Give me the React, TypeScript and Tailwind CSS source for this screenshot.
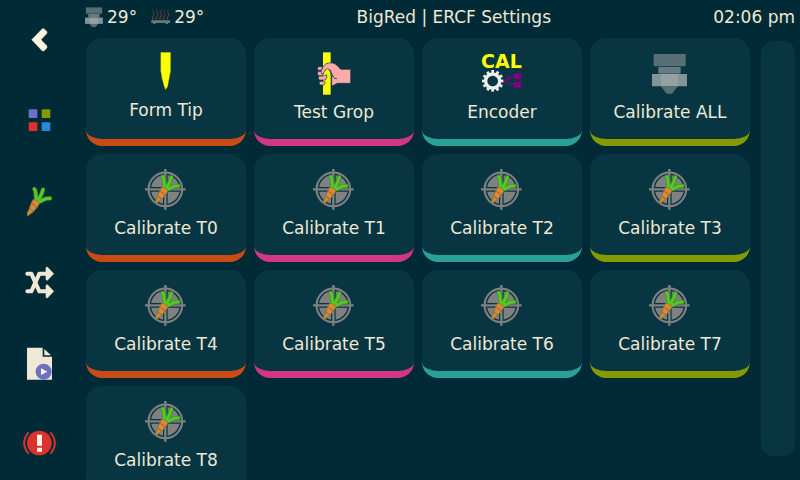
import type { ReactNode } from "react";

function CarrotShape() {
  return (
    <g strokeLinecap="round" strokeLinejoin="round">
      <g fill="none" stroke="#4c7f33" strokeWidth="13">
        <path d="M103 87 L106 92 L109 116" />
        <path d="M129 89 L125 101 L116 119" />
        <path d="M150 115 L137 116 L121 124" />
      </g>
      <path
        d="M102 118 L116 124 L119 130 L110 143 L101 154 L92 161 L83 168 L82 160 L88 147 L91 137 L96 125 Z"
        fill="#e08734"
        stroke="#7f7a3a"
        strokeWidth="3"
      />
      <path d="M97 131 L106 137 M91 147 L99 153 M107 141 L112 142" fill="none" stroke="#7f6a32" strokeWidth="3" />
      <g fill="none" stroke="#50cc22" strokeWidth="9">
        <path d="M103 87 L106 92 L109 116" />
        <path d="M129 89 L125 101 L116 119" />
        <path d="M150 115 L137 116 L121 124" />
      </g>
    </g>
  );
}

function NozzleShape() {
  return (
    <>
      <path d="M203 72h96v37h-96z" fill="#586e75" />
      <path d="M217 111h67v20h-67z" fill="#657b83" />
      <path d="M198 132h105v37H198z" fill="#839496" />
      <path d="M225 132h51v37h-51z" fill="#93a1a1" />
      <path d="M226 170h48l-16 21h-16z" fill="#586e75" />
    </>
  );
}

function TargetIcon() {
  return (
    <svg viewBox="12 24 132 132" className="h-11 w-11" aria-hidden="true">
      <circle cx="76" cy="88" r="47" fill="#808080" />
      <path d="M76 36v104M24 88h104" stroke="#073642" strokeWidth="14" />
      <circle cx="76" cy="88" r="50" fill="none" stroke="#808080" strokeWidth="7" />
      <circle cx="76" cy="88" r="45" fill="none" stroke="#073642" strokeWidth="4" />
      <path d="M76 27v122M15 88h122" stroke="#808080" strokeWidth="7" />
      <g transform="translate(-35 -37)">
        <CarrotShape />
      </g>
    </svg>
  );
}

function TipIcon() {
  return (
    <svg viewBox="192 156 132 126" className="h-[42px] w-11" aria-hidden="true">
      <path
        d="M242 157H272V212L263 260L256 269L252 258L246 236L242 212Z"
        fill="#ffff00"
        stroke="#5f7412"
        strokeWidth="1"
      />
    </svg>
  );
}

function GripIcon() {
  return (
    <svg viewBox="186 66 132 132" className="h-11 w-11" aria-hidden="true">
      <path d="M219 67h23v127h-23z" fill="#ffff00" />
      <g fill="#ffaaaa" stroke="#073642" strokeWidth="2" strokeLinejoin="round">
        <path d="M208 138h16l5-5 2 8-4 9h-19c-4-3-4-9 0-12z" />
        <path d="M210 154h12l4 3-4 8h-12c-3-3-3-8 0-11z" />
        <path d="M205 124h11l5 9-5 4h-11c-3-4-3-9 0-13z" />
        <path d="M205 110h14l-5 11h-9c-3-3-3-8 0-11z" />
        <path d="M213 123L221 108Q227 99 236 99H248Q256 101 262 107L272 118H302V160H262L248 167L245 164V140L240 122L233 116L225 121L221 131L215 132Z" />
      </g>
      <path d="M238 118c6 5 6 13 10 20 3 5 6 8 12 8" fill="none" stroke="#073642" strokeWidth="3" />
    </svg>
  );
}

const gearTeeth = [0, 30, 60, 90, 120, 150];

function EncoderIcon() {
  return (
    <svg viewBox="180 66 132 132" className="h-11 w-11 overflow-visible" aria-hidden="true">
      <text x="183" y="113" fontSize="57" fontWeight="bold" fill="#ffff00" fontFamily="DejaVu Sans, sans-serif">
        CAL
      </text>
      {gearTeeth.map((a) => (
        <path key={a} d="M218 120v65" stroke="#eeeeee" strokeWidth="8" transform={`rotate(${a} 218 153)`} />
      ))}
      <circle cx="218" cy="153" r="26" fill="#eeeeee" />
      <circle cx="218" cy="153" r="16" fill="#073642" />
      <path d="M250 153l22-10M250 153l28 12" stroke="#800080" strokeWidth="4" />
      <path d="M262 139l14 1-7 11z" fill="#800080" />
      <path d="M304 130v18h-17c-11-3-11-15 0-18zM304 155v18h-17c-11-3-11-15 0-18z" fill="#800080" />
    </svg>
  );
}

function NozzleIcon() {
  return (
    <svg viewBox="186 66 132 132" className="h-11 w-11" aria-hidden="true">
      <NozzleShape />
    </svg>
  );
}

function SideIcon({ viewBox, children }: { viewBox: string; children: ReactNode }) {
  return (
    <svg viewBox={viewBox} className="h-10 w-10" aria-hidden="true">
      {children}
    </svg>
  );
}

const sideItems: { label: string; icon: ReactNode }[] = [
  {
    label: "Back",
    icon: (
      <SideIcon viewBox="60 59 120 120">
        <path
          d="M95 118l32-33h5l9 9v5l-18 19 18 19v5l-9 10h-5z"
          fill="#fdf6e3"
          stroke="#fdf6e3"
          strokeWidth="1"
          strokeLinejoin="round"
        />
      </SideIcon>
    ),
  },
  {
    label: "Home",
    icon: (
      <SideIcon viewBox="60 301 120 120">
        <rect x="86" y="329" width="26" height="26" rx="3" fill="#6c71c4" />
        <rect x="125" y="329" width="26" height="26" rx="3" fill="#859900" />
        <rect x="86" y="368" width="26" height="26" rx="3" fill="#dc322f" />
        <rect x="125" y="368" width="26" height="26" rx="3" fill="#268bd2" />
      </SideIcon>
    ),
  },
  {
    label: "ERCF",
    icon: (
      <SideIcon viewBox="60 63 120 120">
        <CarrotShape />
      </SideIcon>
    ),
  },
  {
    label: "Move",
    icon: (
      <SideIcon viewBox="60 306 120 120">
        <g fill="none" stroke="#eee8d5" strokeWidth="12" strokeLinecap="round" strokeLinejoin="round">
          <path d="M82 341h12l24 53h26" />
          <path d="M82 394h12l24-53h26" />
        </g>
        <path
          d="M138 323l4-2 19 20-19 20-4-2zM138 376l4-2 19 20-19 20-4-2z"
          fill="#eee8d5"
          stroke="#eee8d5"
          strokeWidth="2"
          strokeLinejoin="round"
        />
      </SideIcon>
    ),
  },
  {
    label: "Print file",
    icon: (
      <SideIcon viewBox="60 68 120 120">
        <path d="M82 82h46v27h28v69H81V83z" fill="#eee8d5" />
        <path d="M133 86v19h20z" fill="#eee8d5" />
        <circle cx="131" cy="154" r="24" fill="#6c71c4" />
        <path d="M123 144v20l19-10z" fill="#fdf6e3" />
      </SideIcon>
    ),
  },
  {
    label: "Emergency stop",
    icon: (
      <SideIcon viewBox="60 310 120 120">
        <circle cx="118" cy="370" r="37" fill="#dc322f" />
        <path
          d="M86 338c-18 20-18 44 0 64M151 338c18 20 18 44 0 64"
          fill="none"
          stroke="#dc322f"
          strokeWidth="6"
        />
        <path d="M111 345h15v33h-15zM111 384h15v12h-15z" fill="#fdf6e3" />
      </SideIcon>
    ),
  },
];

const accents = ["border-[#cb4b16]", "border-[#d33682]", "border-[#2aa198]", "border-[#859900]"];

const cards: { label: string; icon: ReactNode }[] = [
  { label: "Form Tip", icon: <TipIcon /> },
  { label: "Test Grop", icon: <GripIcon /> },
  { label: "Encoder", icon: <EncoderIcon /> },
  { label: "Calibrate ALL", icon: <NozzleIcon /> },
  ...[0, 1, 2, 3, 4, 5, 6, 7, 8].map((n) => ({ label: `Calibrate T${n}`, icon: <TargetIcon /> })),
];

function Temperatures() {
  return (
    <div className="flex items-center gap-[14px]">
      <div className="flex items-center gap-[3px]">
        <svg viewBox="186 66 132 132" className="h-5 w-5" aria-hidden="true">
          <g transform="translate(-29 -12) scale(1.12)">
            <NozzleShape />
          </g>
        </svg>
        <span>29°</span>
      </div>
      <div className="flex items-center gap-[3px]">
        <svg viewBox="213 21 60 60" className="h-5 w-5" aria-hidden="true">
          <defs>
            <linearGradient id="heat" gradientUnits="userSpaceOnUse" x1="0" y1="28" x2="0" y2="60">
              <stop offset="0" stopColor="#33383c" />
              <stop offset="1" stopColor="#c0392f" />
            </linearGradient>
          </defs>
          <path d="M214 61h56v8h-6v3h-7v-3h-30v3h-7v-3h-6z" fill="#657b83" />
          <g fill="none" stroke="url(#heat)" strokeWidth="3">
            {[220, 231, 242, 253, 264].map((x) => (
              <path key={x} d={`M${x} 29c-5 7 5 11 1 18-2 4-4 7-3 12`} />
            ))}
          </g>
        </svg>
        <span>29°</span>
      </div>
    </div>
  );
}

export default function App() {
  return (
    <div className="flex h-screen overflow-hidden bg-[#002b36] font-['DejaVu_Sans',sans-serif] text-[17px] leading-6 text-[#eee8d5]">
      <nav className="flex w-20 shrink-0 flex-col justify-between pt-[3px]">
        {sideItems.map((item) => (
          <button key={item.label} type="button" aria-label={item.label} className="flex h-[73px] items-center justify-center">
            {item.icon}
          </button>
        ))}
      </nav>
      <div className="flex min-w-0 flex-1 flex-col pr-[5px]">
        <header className="flex h-[38px] shrink-0 items-center pb-1 pl-1">
          <Temperatures />
          <h1 className="flex-1 pr-[10px] text-center">BigRed | ERCF Settings</h1>
          <time>02:06 pm</time>
        </header>
        <div className="flex min-h-0 flex-1 gap-[11px] pl-[6px]">
          <main className="grid flex-1 grid-cols-4 content-start gap-2 overflow-hidden">
            {cards.map((card, i) => (
              <button
                key={card.label}
                type="button"
                className={`flex h-[108px] flex-col items-center gap-1 rounded-2xl border-b-[7px] bg-[#073642] pt-[14px] ${accents[i % 4]}`}
              >
                {card.icon}
                <span>{card.label}</span>
              </button>
            ))}
          </main>
          <div className="mt-[3px] mb-6 w-[34px] shrink-0 rounded-xl bg-[#073642]" />
        </div>
      </div>
    </div>
  );
}
